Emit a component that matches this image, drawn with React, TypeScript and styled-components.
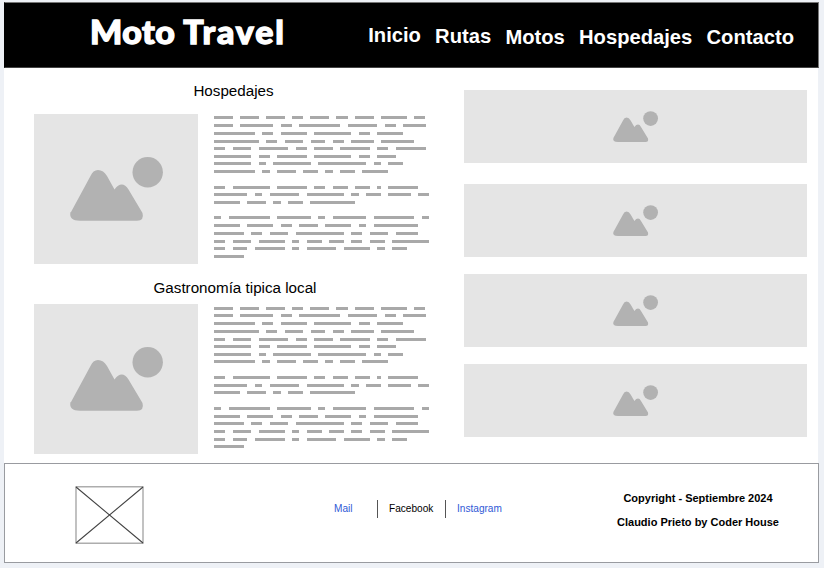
import React from "react";
import styled, { createGlobalStyle } from "styled-components";

const GlobalStyle = createGlobalStyle`
  *, *::before, *::after { box-sizing: border-box; }
  body {
    margin: 0;
    background: #eef1f6;
    font-family: "Liberation Sans", Arial, sans-serif;
    color: #000;
  }
`;

const Page = styled.div`
  width: 824px;
  height: 568px;
  padding: 2px 5px 5px 4px;
  display: flex;
  flex-direction: column;
  overflow: hidden;
`;

const Header = styled.header`
  flex: none;
  height: 66px;
  display: flex;
  align-items: flex-start;
  justify-content: space-between;
  padding: 0 24px 0 85px;
  background: #000;
  border: 1px solid #777;
  border-left-color: #000;
  border-bottom-color: #444;
`;

const Logo = styled.h1`
  display: flex;
  gap: 7.5px;
  margin: 9px 0 0;
  font: 900 32px/40px Lato, sans-serif;
  color: #fff;
  -webkit-text-stroke: 1.3px #fff;
  white-space: nowrap;
  transform: scaleX(1.06);
  transform-origin: 0 50%;
`;

const LogoWord = styled.span<{ $spacing: number }>`
  letter-spacing: ${(p) => p.$spacing}px;
`;

const Nav = styled.nav`
  display: flex;
  gap: 14.2px;
  padding-top: 20px;
`;

const NavLink = styled.a<{ $drop: number }>`
  font-size: 20.2px;
  font-weight: 700;
  line-height: 24px;
  color: #fff;
  margin-top: ${(p) => p.$drop}px;
  text-decoration: none;
`;

const Main = styled.main`
  flex: none;
  width: 814px;
  height: 395px;
  display: grid;
  grid-template-columns: 430px 343px;
  column-gap: 30px;
  background: #fff;
`;

const Articles = styled.div`
  display: flex;
  flex-direction: column;
  padding: 13px 0 0 30px;
`;

const Article = styled.section`
  height: 190px;
  margin-bottom: 7px;
`;

const Title = styled.h2<{ $height: number; $width: number }>`
  width: ${(p) => p.$width}px;
  height: ${(p) => p.$height}px;
  margin: 0;
  font-size: 15.2px;
  font-weight: 400;
  line-height: 20px;
  text-align: center;
`;

const ArticleBody = styled.div`
  display: flex;
  gap: 16px;
`;

const Picture = styled.div<{ $w: number; $h: number }>`
  flex: none;
  width: ${(p) => p.$w}px;
  height: ${(p) => p.$h}px;
  display: flex;
  align-items: center;
  justify-content: center;
  background: #e5e5e5;
`;

const Copy = styled.div<{ $top: number }>`
  padding-top: ${(p) => p.$top}px;
`;

const Line = styled.div<{ $height: number }>`
  display: flex;
  gap: 7.42px;
  height: ${(p) => p.$height}px;
`;

const Word = styled.span<{ $units: number }>`
  width: ${(p) => p.$units * 3.715}px;
  height: 3px;
  background: #a9a9a9;
`;

const Gallery = styled.aside`
  display: flex;
  flex-direction: column;
  padding-top: 22px;
`;

const GalleryItem = styled.div<{ $gap: number }>`
  margin-bottom: ${(p) => p.$gap}px;
`;

const Footer = styled.footer`
  flex: none;
  height: 100px;
  display: grid;
  grid-template-columns: 310px 258px 1fr;
  border: 1px solid #999ba0;
  background: #fff;
`;

const FooterLogo = styled.div`
  padding: 22px 0 0 70px;
`;

const Links = styled.div`
  display: flex;
  align-items: flex-start;
  height: 18px;
  margin-top: 36px;
  padding-left: 19px;
  font-size: 10.1px;
  line-height: 18px;
`;

const SocialLink = styled.a<{ $width: number; $plain?: boolean }>`
  width: ${(p) => p.$width}px;
  color: ${(p) => (p.$plain ? "#000" : "#2f5ad6")};
  text-decoration: none;
`;

const Divider = styled.span<{ $gap: number }>`
  width: 1px;
  height: 18px;
  margin-right: ${(p) => p.$gap}px;
  background: #555;
`;

const Credits = styled.div`
  width: 250px;
  padding-top: 22px;
  font-size: 11px;
  font-weight: 700;
  line-height: 24px;
  text-align: center;
`;

const Credit = styled.p`
  margin: 0;
`;

/* Word lengths of each placeholder line; an empty line separates paragraphs. */
const LINES: number[][] = [
  [5, 5, 5, 3, 5, 3, 5, 7, 3],
  [5, 9, 3, 11, 8, 3, 6],
  [11, 3, 7, 10, 3, 7],
  [12, 3, 5, 4, 3, 6, 9],
  [3, 5, 8, 3, 5, 8, 3, 8],
  [10, 3, 8, 10, 3, 5],
  [10, 2, 10, 13, 2, 4],
  [11, 2, 5, 4, 2, 4, 7],
  [],
  [3, 10, 8, 3, 4, 4, 1, 8],
  [9, 2, 8, 10, 2, 4, 6, 3],
  [7, 5, 2, 4, 12],
  [],
  [2, 11, 9, 2, 9, 11, 2],
  [7, 7, 3, 5, 7, 2, 12],
  [8, 3, 5, 13, 3, 5, 6],
  [3, 5, 7, 2, 4, 4, 3, 4, 10],
  [3, 4, 8, 2, 8, 7, 2, 4],
  [8],
];

function Placeholder({ top, heights }: { top: number; heights: number[] }) {
  return (
    <Copy $top={top}>
      {LINES.map((words, i) => (
        <Line key={i} $height={heights[i]}>
          {words.map((units, j) => (
            <Word key={j} $units={units} />
          ))}
        </Line>
      ))}
    </Copy>
  );
}

function LargeMountains() {
  return (
    <svg width="164" height="150" viewBox="0 0 164 150" fill="#b2b2b2">
      <circle cx="113.7" cy="58.2" r="15.2" />
      <path d="M37 98 L56.5 62 Q59 56 64 56 Q69.500 56 73 62 L80.500 75.500 Q84 70.500 87.800 70.500 Q91.300 70.500 94.500 75.500 L108.500 99 Q110.500 106.700 103 106.700 H46 Q34.500 106.700 36.500 98 Z" />
    </svg>
  );
}

function SmallMountains() {
  return (
    <svg width="343" height="73" viewBox="0 0 343 73" fill="#b2b2b2">
      <circle cx="186.6" cy="28.600" r="7.4" />
      <path d="M149.400 48 L159 30.500 Q160.200 27.600 162.600 27.600 Q165 27.600 166.600 30.500 L170.400 37 Q172.200 34.600 174 34.600 Q175.700 34.600 177 37 L184 48.500 Q184.800 52 181.500 52 H154 Q148.200 52 149.400 48 Z" />
    </svg>
  );
}

const NAV = [
  { label: "Inicio", drop: 0 },
  { label: "Rutas", drop: 1 },
  { label: "Motos", drop: 2 },
  { label: "Hospedajes", drop: 2 },
  { label: "Contacto", drop: 2 },
];

const ARTICLES = [
  {
    title: "Hospedajes",
    width: 399,
    height: 33,
    top: 2,
    lines: [8, 8, 8, 7, 8, 7, 8, 8, 8, 7, 8, 8, 7, 8, 8, 8, 7, 8, 8],
  },
  {
    title: "Gastronomía tipica local",
    width: 402,
    height: 26,
    top: 3,
    lines: [7, 8, 8, 8, 7, 8, 7, 8, 8, 8, 7, 8, 8, 8, 7, 8, 8, 7, 8],
  },
];

export default function App() {
  return (
    <>
      <GlobalStyle />
      <Page>
        <Header>
          <Logo>
            <LogoWord $spacing={0.5}>Moto</LogoWord>
            <LogoWord $spacing={1.8}>Travel</LogoWord>
          </Logo>
          <Nav>
            {NAV.map((n) => (
              <NavLink key={n.label} $drop={n.drop}>
                {n.label}
              </NavLink>
            ))}
          </Nav>
        </Header>
        <Main>
          <Articles>
            {ARTICLES.map((a) => (
              <Article key={a.title}>
                <Title $height={a.height} $width={a.width}>
                  {a.title}
                </Title>
                <ArticleBody>
                  <Picture $w={164} $h={150}>
                    <LargeMountains />
                  </Picture>
                  <Placeholder top={a.top} heights={a.lines} />
                </ArticleBody>
              </Article>
            ))}
          </Articles>
          <Gallery>
            {[21, 17, 17, 0].map((gap, i) => (
              <GalleryItem key={i} $gap={gap}>
                <Picture $w={343} $h={73}>
                  <SmallMountains />
                </Picture>
              </GalleryItem>
            ))}
          </Gallery>
        </Main>
        <Footer>
          <FooterLogo>
            <svg width="69" height="58" viewBox="0 0 69 58" fill="none">
              <rect x="1" y="0.8" width="67" height="56.4" stroke="#999" strokeWidth="1.2" />
              <path d="M1 1 L68 57 M68 1 L1 57" stroke="#444" strokeWidth="1.1" />
            </svg>
          </FooterLogo>
          <Links>
            <SocialLink $width={43}>Mail</SocialLink>
            <Divider $gap={11} />
            <SocialLink $width={56} $plain>
              Facebook
            </SocialLink>
            <Divider $gap={11} />
            <SocialLink $width={50}>Instagram</SocialLink>
          </Links>
          <Credits>
            <Credit>Copyright - Septiembre 2024</Credit>
            <Credit>Claudio Prieto by Coder House</Credit>
          </Credits>
        </Footer>
      </Page>
    </>
  );
}
